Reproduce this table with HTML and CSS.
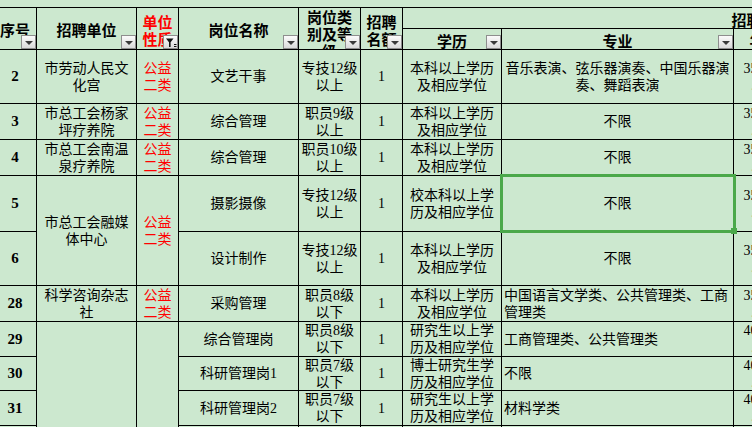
FILE: index.html
```html
<!DOCTYPE html>
<html lang="zh-CN">
<head>
<meta charset="utf-8">
<title>招聘岗位表</title>
<link rel="stylesheet" href="styles.css">
</head>
<body>
<div class="sheet">
  <div class="c title"></div>

  <div class="c h rs2">序号<span class="dd"></span></div>
  <div class="c h rs2">招聘单位<span class="dd"></span></div>
  <div class="c h rs2 red">单位性质<span class="dd filt"><svg width="13" height="13" viewBox="0 0 13 13"><path d="M2 2.5h7.5L6.6 6.2V11H5V6.2z" fill="#111"/><path d="M10 8.5h2.5M10 10.5h2.5" stroke="#111" stroke-width="1"/></svg></span></div>
  <div class="c h rs2">岗位名称<span class="dd"></span></div>
  <div class="c h rs2 top">岗位类别及等级<span class="dd"></span></div>
  <div class="c h rs2">招聘名额<span class="dd"></span></div>
  <div class="c h grp">招聘条件</div>
  <div class="c h">学历<span class="dd"></span></div>
  <div class="c h">专业<span class="dd"></span></div>
  <div class="c h age">年龄<span class="dd"></span></div>
  <div class="c h"></div>

  <div class="c no">2</div>
  <div class="c">市劳动人民文化宫</div>
  <div class="c red">公益二类</div>
  <div class="c">文艺干事</div>
  <div class="c">专技12级以上</div>
  <div class="c">1</div>
  <div class="c">本科以上学历及相应学位</div>
  <div class="c">音乐表演、弦乐器演奏、中国乐器演奏、舞蹈表演</div>
  <div class="c age">35周岁以下</div>
  <div class="c"></div>

  <div class="c no">3</div>
  <div class="c">市总工会杨家坪疗养院</div>
  <div class="c red">公益二类</div>
  <div class="c">综合管理</div>
  <div class="c">职员9级以上</div>
  <div class="c">1</div>
  <div class="c">本科以上学历及相应学位</div>
  <div class="c">不限</div>
  <div class="c age">35周岁以下</div>
  <div class="c"></div>

  <div class="c no">4</div>
  <div class="c">市总工会南温泉疗养院</div>
  <div class="c red">公益二类</div>
  <div class="c">综合管理</div>
  <div class="c">职员10级以上</div>
  <div class="c">1</div>
  <div class="c">本科以上学历及相应学位</div>
  <div class="c">不限</div>
  <div class="c age">35周岁以下</div>
  <div class="c"></div>

  <div class="c no">5</div>
  <div class="c rs2">市总工会融媒体中心</div>
  <div class="c rs2 red">公益二类</div>
  <div class="c">摄影摄像</div>
  <div class="c">专技12级以上</div>
  <div class="c">1</div>
  <div class="c">校本科以上学历及相应学位</div>
  <div class="c sel">不限</div>
  <div class="c age">35周岁以下</div>
  <div class="c"></div>

  <div class="c no">6</div>
  <div class="c">设计制作</div>
  <div class="c">专技12级以上</div>
  <div class="c">1</div>
  <div class="c">本科以上学历及相应学位</div>
  <div class="c">不限</div>
  <div class="c age">35周岁以下</div>
  <div class="c"></div>

  <div class="c no">28</div>
  <div class="c">科学咨询杂志社</div>
  <div class="c red">公益二类</div>
  <div class="c">采购管理</div>
  <div class="c">职员8级以下</div>
  <div class="c">1</div>
  <div class="c">本科以上学历及相应学位</div>
  <div class="c left">中国语言文学类、公共管理类、工商管理类</div>
  <div class="c age">35周岁以下</div>
  <div class="c"></div>

  <div class="c no">29</div>
  <div class="c rs4"></div>
  <div class="c rs4"></div>
  <div class="c">综合管理岗</div>
  <div class="c">职员8级以下</div>
  <div class="c">1</div>
  <div class="c">研究生以上学历及相应学位</div>
  <div class="c left">工商管理类、公共管理类</div>
  <div class="c age">40周岁以下</div>
  <div class="c"></div>

  <div class="c no">30</div>
  <div class="c">科研管理岗1</div>
  <div class="c">职员7级以下</div>
  <div class="c">1</div>
  <div class="c">博士研究生学历及相应学位</div>
  <div class="c left">不限</div>
  <div class="c age">40周岁以下</div>
  <div class="c"></div>

  <div class="c no">31</div>
  <div class="c">科研管理岗2</div>
  <div class="c">职员7级以下</div>
  <div class="c">1</div>
  <div class="c">研究生以上学历及相应学位</div>
  <div class="c left">材料学类</div>
  <div class="c age">40周岁以下</div>
  <div class="c"></div>

  <div class="c no"></div>
  <div class="c"></div>
  <div class="c"></div>
  <div class="c"></div>
  <div class="c"></div>
  <div class="c"></div>
  <div class="c"></div>
  <div class="c"></div>
</div>
</body>
</html>
```

FILE: styles.css
```css
html, body {
  margin: 0;
  padding: 0;
  overflow: hidden;
  background: #cce8cf;
}

.sheet {
  display: grid;
  grid-template-columns: 43px 100px 42px 120px 62px 42px 99px 232px 62px 325px;
  grid-template-rows: 8px 21px 21px 54px 36px 36px 56px 54px 36px 35px 34px 35px 40px;
  width: max-content;
  margin-left: -6px;
  font-family: "Liberation Serif", "Noto Sans CJK SC", serif;
  font-size: 14px;
  line-height: 17px;
  color: #000;
  background: #cce8cf;
}

.c {
  box-sizing: border-box;
  border-right: 1px solid #000;
  border-bottom: 1px solid #000;
  display: flex;
  align-items: center;
  justify-content: center;
  text-align: center;
  padding: 0 2px;
  overflow: hidden;
  min-width: 0;
  min-height: 0;
}

.title {
  grid-column: 1 / -1;
  border-right: 0;
}

.rs2 { grid-row: span 2; }
.rs4 { grid-row: span 4; }
.grp { grid-column: span 4; }

.h {
  position: relative;
  font-family: "Noto Sans CJK SC", sans-serif;
  font-weight: bold;
  font-size: 15px;
  line-height: 17px;
  padding-top: 2px;
}

.h.top {
  align-items: flex-start;
  padding-top: 0;
}

.red { color: #ff0000; }

.no {
  font-weight: bold;
  font-size: 15px;
}

.left {
  justify-content: flex-start;
  text-align: left;
}

.age { padding: 0 3px; }

.dd {
  position: absolute;
  right: 0;
  bottom: 0;
  width: 15px;
  height: 14px;
  box-sizing: border-box;
  border: 1px solid #8e8e8e;
  background: linear-gradient(#fbfbfb, #dadada);
  display: flex;
  align-items: center;
  justify-content: center;
}

.dd::after {
  content: "";
  border-left: 4px solid transparent;
  border-right: 4px solid transparent;
  border-top: 4px solid #3a3a3a;
  margin-top: 1px;
}

.dd.filt::after { display: none; }
.dd svg { display: block; }

.sel {
  position: relative;
  overflow: visible;
  z-index: 2;
}

.sel::before {
  content: "";
  position: absolute;
  left: -2px;
  top: -2px;
  right: -3px;
  bottom: -2px;
  border: 3px solid #4aa84a;
}

.sel::after {
  content: "";
  position: absolute;
  right: -4px;
  bottom: -3px;
  width: 6px;
  height: 6px;
  background: #4aa84a;
}
```
